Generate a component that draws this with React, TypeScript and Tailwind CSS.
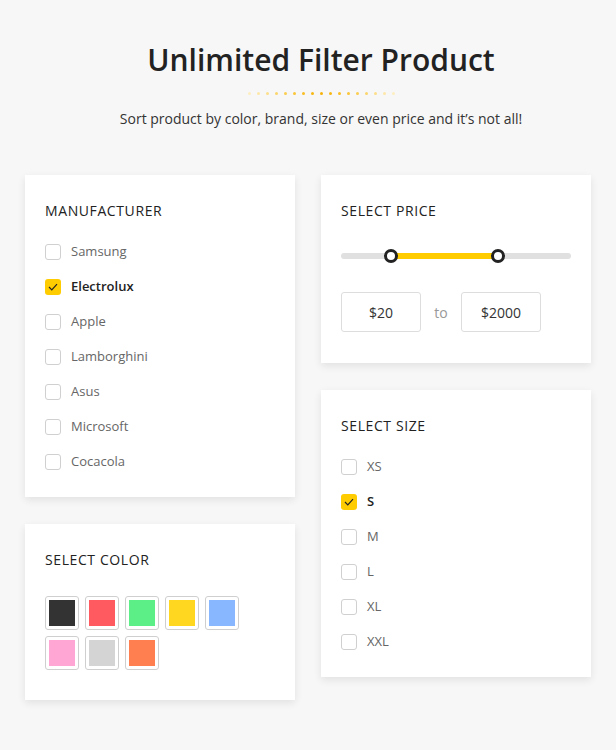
import { useState } from "react";

const manufacturers = [
  "Samsung",
  "Electrolux",
  "Apple",
  "Lamborghini",
  "Asus",
  "Microsoft",
  "Cocacola",
];

const sizes = ["XS", "S", "M", "L", "XL", "XXL"];

const colors = [
  "#333333",
  "#ff5a60",
  "#5cef87",
  "#ffd620",
  "#89b7ff",
  "#ffa6d5",
  "#d4d4d4",
  "#ff7f50",
];

const dots = [
  "#fdeec0",
  "#fde7a8",
  "#fcdf8a",
  "#fbd66c",
  "#fbcd4e",
  "#fac538",
  "#f9be24",
  "#f8b814",
  "#f7b30a",
  "#f8b814",
  "#f9be24",
  "#fac538",
  "#fbcd4e",
  "#fbd66c",
  "#fcdf8a",
  "#fde7a8",
  "#fdeec0",
];

function Check() {
  return (
    <svg width="10" height="8" viewBox="0 0 10 8" fill="none">
      <path d="M1 4l2.8 2.8L9 1.2" stroke="#222" strokeWidth="1.2" />
    </svg>
  );
}

function CheckItem({ label, checked }: { label: string; checked?: boolean }) {
  return (
    <label className="flex h-[35px] items-center gap-[10px] cursor-pointer">
      <span
        className={
          checked
            ? "flex h-4 w-4 items-center justify-center rounded-[3px] bg-[#ffcc00]"
            : "h-4 w-4 rounded-[3px] border border-[#d0d0d0] bg-white"
        }
      >
        {checked && <Check />}
      </span>
      <span
        className={
          checked
            ? "text-[13px] font-semibold text-[#222]"
            : "text-[13px] text-[#666]"
        }
      >
        {label}
      </span>
    </label>
  );
}

function Card({ title, children }: { title: string; children: React.ReactNode }) {
  return (
    <div className="bg-white px-5 pt-[26px] shadow-[0_3px_8px_rgba(0,0,0,0.09)]">
      <h3 className="text-[14px] leading-5 tracking-[0.6px] text-[#222]">
        {title}
      </h3>
      {children}
    </div>
  );
}

export default function App() {
  const [brand] = useState("Electrolux");
  const [size] = useState("S");

  return (
    <div
      className="min-h-[750px] bg-[#f7f7f7] pt-[38px]"
      style={{ fontFamily: '"Open Sans", sans-serif' }}
    >
      <div className="flex flex-col items-center pl-[26px]">
        <h1 className="text-[30px] font-semibold leading-[44px] text-[#222]">
          Unlimited Filter Product
        </h1>
        <div className="mt-[10px] flex gap-[6px]">
          {dots.map((c, i) => (
            <span
              key={i}
              className="h-[3px] w-[3px] rounded-full"
              style={{ background: c }}
            />
          ))}
        </div>
        <p className="mt-[14px] text-[14px] leading-5 text-[#333]">
          Sort product by color, brand, size or even price and it’s not all!
        </p>
      </div>

      <div className="mt-[46px] flex gap-[26px] px-[25px]">
        <div className="flex w-[270px] flex-col gap-[27px]">
          <Card title="MANUFACTURER">
            <div className="mt-[13px] pb-[18px]">
              {manufacturers.map((m) => (
                <CheckItem key={m} label={m} checked={m === brand} />
              ))}
            </div>
          </Card>
          <Card title="SELECT COLOR">
            <div className="mt-[26px] grid grid-cols-[repeat(5,34px)] gap-[6px] pb-[30px]">
              {colors.map((c) => (
                <button
                  key={c}
                  className="h-[34px] w-[34px] rounded-[3px] border border-[#cfcfcf] bg-white p-[3px]"
                >
                  <span className="block h-full w-full" style={{ background: c }} />
                </button>
              ))}
            </div>
          </Card>
        </div>

        <div className="flex w-[270px] flex-col gap-[27px]">
          <Card title="SELECT PRICE">
            <div className="relative mt-[32px] h-[6px] rounded-full bg-[#e0e0e0]">
              <div className="absolute left-[50px] top-0 h-[6px] w-[107px] bg-[#ffcc00]" />
              <span className="absolute left-[43px] top-[-4px] h-[14px] w-[14px] rounded-full border-[3px] border-[#222] bg-white" />
              <span className="absolute left-[150px] top-[-4px] h-[14px] w-[14px] rounded-full border-[3px] border-[#222] bg-white" />
            </div>
            <div className="mt-[33px] flex items-center pb-[31px]">
              <div className="flex h-10 w-20 items-center justify-center rounded-[3px] border border-[#ddd] text-[14px] font-medium text-[#333]">
                $20
              </div>
              <span className="w-10 text-center text-[14px] text-[#999]">to</span>
              <div className="flex h-10 w-20 items-center justify-center rounded-[3px] border border-[#ddd] text-[14px] font-medium text-[#333]">
                $2000
              </div>
            </div>
          </Card>
          <Card title="SELECT SIZE">
            <div className="mt-[13px] pb-[18px]">
              {sizes.map((s) => (
                <CheckItem key={s} label={s} checked={s === size} />
              ))}
            </div>
          </Card>
        </div>
      </div>
    </div>
  );
}
